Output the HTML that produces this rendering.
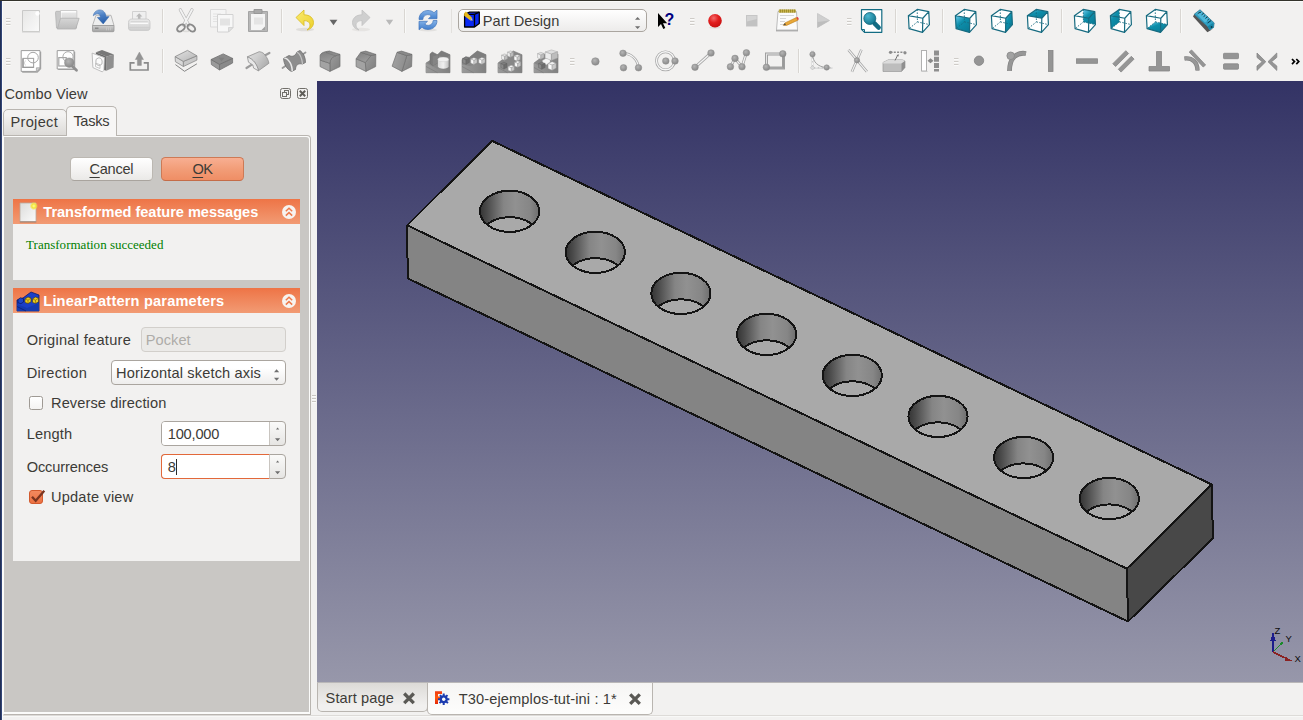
<!DOCTYPE html>
<html>
<head>
<meta charset="utf-8">
<title>FreeCAD</title>
<style>
html,body{margin:0;padding:0;}
body{width:1303px;height:720px;overflow:hidden;background:#f2f1f0;position:relative;font-family:"Liberation Sans","DejaVu Sans",sans-serif;font-size:14.6px;color:#3c3b37;}
.abs{position:absolute;}
#topline{left:0;top:0;width:1303px;height:1px;background:#34332b;}
#topwhite{left:2px;top:1px;width:1301px;height:1px;background:#fbfbfa;}
#leftedge{left:0;top:1px;width:2px;height:719px;background:linear-gradient(to right,#1a2444,#3a5088);}
#leftwhite{left:2px;top:1px;width:1px;height:719px;background:#fbfbfa;}
.t{position:absolute;white-space:nowrap;}
.t u{text-decoration:underline;text-underline-offset:3px;text-decoration-thickness:1px;}
#view{left:317px;top:81px;width:986px;height:601px;background:linear-gradient(to bottom,#333365,#9797aa);overflow:hidden;}
#frameo{left:3px;top:135px;width:308px;height:580px;box-sizing:border-box;border:1px solid #b9b5b0;border-left-color:#fbfbfa;border-radius:0 4px 0 0;background:#fbfbfa;}
#frame{left:4px;top:137px;width:305px;height:575px;background:#c9c7c4;border-radius:0 3px 0 0;}
.tab{position:absolute;box-sizing:border-box;border:1px solid #b9b5b0;border-bottom:none;border-radius:5px 5px 0 0;}
.hdr{position:absolute;left:13px;width:287px;height:25px;background:linear-gradient(to bottom,#ee7446,#f29b74);}
.box{position:absolute;left:13px;width:287px;background:#f2f1f0;}
.btn{position:absolute;box-sizing:border-box;border:1px solid #aca7a1;border-radius:4.5px;}
.inp{position:absolute;box-sizing:border-box;border:1px solid #b3aea8;border-radius:4px;background:#fff;}
.cb{position:absolute;box-sizing:border-box;width:14px;height:14px;border:1px solid #9f9a94;border-radius:2.5px;background:linear-gradient(to bottom,#ffffff,#f4f3f2);}
.circ{position:absolute;width:14px;height:14px;border-radius:7px;background:#f7f3f0;}

</style>
</head>
<body>
<div id="topline" class="abs"></div>
<div id="topwhite" class="abs"></div>
<!-- 3D VIEW -->
<div id="view" class="abs">
<svg width="986" height="601" viewBox="317 81 986 601" style="position:absolute;left:0;top:0" shape-rendering="crispEdges">
<defs>
<linearGradient id="gWall" x1="0" y1="0" x2="1" y2="0"><stop offset="0" stop-color="#343434"/><stop offset="0.12" stop-color="#4a4a4a"/><stop offset="0.4" stop-color="#858585"/><stop offset="0.6" stop-color="#919191"/><stop offset="0.85" stop-color="#868686"/><stop offset="1" stop-color="#6e6e6e"/></linearGradient>
</defs>
<polygon points="492.0,140.8 407.2,225.3 1126.9,568.7 1211.6,484.4" fill="#a9a9a9"/>
<polygon points="407.2,225.3 1126.9,568.7 1128.0,621.5 407.7,278.4" fill="#848484"/>
<polygon points="1126.9,568.7 1211.6,484.4 1213.0,538.2 1128.0,621.5" fill="#484848"/>
<clipPath id="hc0"><ellipse cx="509.6" cy="211.3" rx="29.6" ry="20.6"/></clipPath>
<g clip-path="url(#hc0)"><rect x="480.0" y="190.7" width="59.2" height="41.2" fill="url(#gWall)"/><ellipse cx="509.6" cy="237.8" rx="29.6" ry="20.6" fill="#a9a9a9" stroke="#141414" stroke-width="2"/></g>
<ellipse cx="509.6" cy="211.3" rx="29.6" ry="20.6" fill="none" stroke="#141414" stroke-width="2"/>
<clipPath id="hc1"><ellipse cx="595.3" cy="252.3" rx="29.6" ry="20.6"/></clipPath>
<g clip-path="url(#hc1)"><rect x="565.7" y="231.7" width="59.2" height="41.2" fill="url(#gWall)"/><ellipse cx="595.3" cy="278.8" rx="29.6" ry="20.6" fill="#a9a9a9" stroke="#141414" stroke-width="2"/></g>
<ellipse cx="595.3" cy="252.3" rx="29.6" ry="20.6" fill="none" stroke="#141414" stroke-width="2"/>
<clipPath id="hc2"><ellipse cx="680.9" cy="293.4" rx="29.6" ry="20.6"/></clipPath>
<g clip-path="url(#hc2)"><rect x="651.3" y="272.8" width="59.2" height="41.2" fill="url(#gWall)"/><ellipse cx="680.9" cy="319.9" rx="29.6" ry="20.6" fill="#a9a9a9" stroke="#141414" stroke-width="2"/></g>
<ellipse cx="680.9" cy="293.4" rx="29.6" ry="20.6" fill="none" stroke="#141414" stroke-width="2"/>
<clipPath id="hc3"><ellipse cx="766.6" cy="334.4" rx="29.6" ry="20.6"/></clipPath>
<g clip-path="url(#hc3)"><rect x="737.0" y="313.8" width="59.2" height="41.2" fill="url(#gWall)"/><ellipse cx="766.6" cy="360.9" rx="29.6" ry="20.6" fill="#a9a9a9" stroke="#141414" stroke-width="2"/></g>
<ellipse cx="766.6" cy="334.4" rx="29.6" ry="20.6" fill="none" stroke="#141414" stroke-width="2"/>
<clipPath id="hc4"><ellipse cx="852.3" cy="375.4" rx="29.6" ry="20.6"/></clipPath>
<g clip-path="url(#hc4)"><rect x="822.7" y="354.8" width="59.2" height="41.2" fill="url(#gWall)"/><ellipse cx="852.3" cy="401.9" rx="29.6" ry="20.6" fill="#a9a9a9" stroke="#141414" stroke-width="2"/></g>
<ellipse cx="852.3" cy="375.4" rx="29.6" ry="20.6" fill="none" stroke="#141414" stroke-width="2"/>
<clipPath id="hc5"><ellipse cx="938.0" cy="416.4" rx="29.6" ry="20.6"/></clipPath>
<g clip-path="url(#hc5)"><rect x="908.4" y="395.8" width="59.2" height="41.2" fill="url(#gWall)"/><ellipse cx="938.0" cy="442.9" rx="29.6" ry="20.6" fill="#a9a9a9" stroke="#141414" stroke-width="2"/></g>
<ellipse cx="938.0" cy="416.4" rx="29.6" ry="20.6" fill="none" stroke="#141414" stroke-width="2"/>
<clipPath id="hc6"><ellipse cx="1023.6" cy="457.5" rx="29.6" ry="20.6"/></clipPath>
<g clip-path="url(#hc6)"><rect x="994.0" y="436.9" width="59.2" height="41.2" fill="url(#gWall)"/><ellipse cx="1023.6" cy="484.0" rx="29.6" ry="20.6" fill="#a9a9a9" stroke="#141414" stroke-width="2"/></g>
<ellipse cx="1023.6" cy="457.5" rx="29.6" ry="20.6" fill="none" stroke="#141414" stroke-width="2"/>
<clipPath id="hc7"><ellipse cx="1109.3" cy="498.5" rx="29.6" ry="20.6"/></clipPath>
<g clip-path="url(#hc7)"><rect x="1079.7" y="477.9" width="59.2" height="41.2" fill="url(#gWall)"/><ellipse cx="1109.3" cy="525.0" rx="29.6" ry="20.6" fill="#a9a9a9" stroke="#141414" stroke-width="2"/></g>
<ellipse cx="1109.3" cy="498.5" rx="29.6" ry="20.6" fill="none" stroke="#141414" stroke-width="2"/>
<g fill="none" stroke="#141414" stroke-width="2" stroke-linejoin="round" stroke-linecap="round"><polygon points="492.0,140.8 407.2,225.3 1126.9,568.7 1211.6,484.4"/><polyline points="407.2,225.3 407.7,278.4 1128.0,621.5 1213.0,538.2 1211.6,484.4"/><polyline points="1126.9,568.7 1128.0,621.5"/></g>
<g font-family="'Liberation Sans','DejaVu Sans',sans-serif" font-size="9.500" fill="#0c0c0c">
<path d="M1273 652V633" stroke="#1c1c8c" stroke-width="2.400"/><path d="M1270 641l3-8 3 8z" fill="#1c1c8c"/>
<path d="M1273 652l9.500-9.500" stroke="#1a8a2a" stroke-width="1.400"/><path d="M1279 643l4.500-1.500-1.500 4.500z" fill="#1a8a2a"/>
<path d="M1273 652l18.500 9" stroke="#8a2222" stroke-width="1.600"/><path d="M1284.500 656l7.500 5-6.500-.2z" fill="#8a2222"/>
<text x="1274.500" y="634">Z</text><text x="1285.500" y="642">Y</text><text x="1294.500" y="662">X</text></g>
</svg>
</div>
<!-- COMBO VIEW -->
<svg class="abs" style="left:278px;top:86px" width="34" height="15" viewBox="278 86 34 15">
<rect x="280.500" y="88.500" width="10" height="10" rx="2" fill="none" stroke="#716f6a" stroke-width="1"/>
<rect x="284.500" y="90.500" width="4" height="4" fill="none" stroke="#716f6a"/>
<rect x="282.500" y="92.500" width="4" height="4" fill="#f2f1f0" stroke="#716f6a"/>
<rect x="297.500" y="88.500" width="10" height="10" rx="2" fill="none" stroke="#716f6a" stroke-width="1"/>
<path d="M299.800 90.800l5.400 5.400M305.200 90.800l-5.400 5.400" stroke="#5f5d58" stroke-width="2"/>
</svg>
<div id="frameo" class="abs"></div>
<div id="frame" class="abs"></div>
<div class="tab" style="left:3px;top:109px;width:64px;height:27px;background:linear-gradient(to bottom,#f3f2f1 20%,#dddbd8);border-bottom:1px solid #b9b5b0;"></div>
<div class="tab" style="left:66px;top:106px;width:51px;height:30px;background:#f7f6f5;"></div>
<div class="abs" style="left:67px;top:136px;width:49px;height:1px;background:#f9f8f7;"></div>
<!-- buttons -->
<div class="btn" style="left:70px;top:157px;width:83px;height:24px;border-color:#bcb8b2 #bcb8b2 #a9a49e;background:linear-gradient(to bottom,#ffffff,#f3f2f1 60%,#eae9e7);"></div>
<div class="btn" style="left:161px;top:157px;width:83px;height:24px;border-color:#cd7a56 #cd7a56 #c46c48;background:linear-gradient(to bottom,#f8af92,#f29d78 50%,#ef8e65);"></div>
<!-- group 1 -->
<div class="hdr" style="top:199px;"></div>
<div class="box" style="top:224px;height:56px;"></div>
<svg class="abs" style="left:18px;top:201px" width="22" height="22" viewBox="18 201 22 22">
<defs><radialGradient id="gStar"><stop offset="0" stop-color="#ffff9a"/><stop offset="0.5" stop-color="#f4e43a"/><stop offset="1" stop-color="#f4e43a" stop-opacity="0"/></radialGradient>
<linearGradient id="gPg" x1="0" y1="0" x2="1" y2="1"><stop offset="0" stop-color="#dcdcdb"/><stop offset="1" stop-color="#fbfbfb"/></linearGradient></defs>
<path d="M20 203h16v18.500h-16z" fill="url(#gPg)" stroke="#b9a9a0" stroke-width="0.800"/>
<path d="M19.800 222h16.500" stroke="#8a7a70" stroke-width="0.800"/>
<circle cx="33.800" cy="206" r="4.200" fill="url(#gStar)"/>
</svg>
<div class="circ" style="left:282px;top:205px;"></div>
<!-- group 2 -->
<div class="hdr" style="top:288px;"></div>
<div class="box" style="top:313px;height:248px;"></div>
<div class="circ" style="left:282px;top:294px;"></div>
<svg class="abs" style="left:280px;top:200px" width="20" height="112" viewBox="280 200 20 112">
<path d="M285.800 211.200l3.200-3 3.200 3M285.800 215.600l3.200-3 3.200 3" fill="none" stroke="#ee7a4c" stroke-width="1.500"/>
<path d="M285.800 300.200l3.200-3 3.200 3M285.800 304.600l3.200-3 3.200 3" fill="none" stroke="#ee7a4c" stroke-width="1.500"/>
</svg>
<svg class="abs" style="left:16px;top:290px" width="24" height="22" viewBox="16 290 24 22">
<path d="M17 300l6-2 8-6 8 3v16h-22z" fill="#1a3fc8" stroke="#0a1a70" stroke-width="0.800" stroke-linejoin="round"/>
<path d="M17 304l10 4 12-5v8h-22z" fill="#143ab0"/>
<path d="M17 306.500l9 4.500" stroke="#0a1a70" stroke-width="0.700"/>
<path d="M18 299.500l2.500-1.800 3 1v3.300l-2.600 1.700-2.900-1z" fill="#1a44c8" stroke="#08124a" stroke-width="0.600"/>
<path d="M25 299l3-2 3 1.200v3.600l-3 1.800-3-1.200z" fill="#e8c81e" stroke="#4a3a08" stroke-width="0.600"/>
<path d="M32.500 299l3-2 3 1.200v3.600l-3 1.800-3-1.200z" fill="#e8c81e" stroke="#4a3a08" stroke-width="0.600"/>
<path d="M25 299l3 1.200 3-2M28 300.200v3.400M32.500 299l3 1.200 3-2M35.500 300.200v3.400" fill="none" stroke="#6a5208" stroke-width="0.500"/>
</svg>
<!-- fields -->
<div class="inp" style="left:141px;top:327px;width:145px;height:25px;background:#ebeae8;border-color:#d2cfcb;"></div>
<div class="inp" style="left:111px;top:360px;width:175px;height:25px;border-color:#aaa59f;background:linear-gradient(to bottom,#ffffff 30%,#eeedec);"></div>
<div class="cb" style="left:29px;top:396px;"></div>
<!-- spin 1 -->
<div class="inp" style="left:161px;top:421px;width:125px;height:25px;border-color:#aaa59f;background:linear-gradient(to bottom,#fafaf9,#e6e5e3);"></div>
<div class="abs" style="left:162px;top:422px;width:107px;height:23px;background:#fff;border-radius:3px 0 0 3px;border-right:1px solid #c9c5c0;"></div>
<!-- spin 2 -->
<div class="inp" style="left:161px;top:454px;width:125px;height:25px;border-color:#aaa59f;background:linear-gradient(to bottom,#fafaf9,#e6e5e3);"></div>
<div class="abs" style="left:161px;top:454px;width:109px;height:25px;box-sizing:border-box;background:#fff;border-radius:4px 0 0 4px;border:1.500px solid #e2683a;border-right:1px solid #c9c5c0;"></div>
<div class="abs" style="left:176px;top:459px;width:1px;height:16px;background:#2a2a2a;"></div>
<svg class="abs" style="left:268px;top:360px" width="20" height="122" viewBox="268 360 20 122">
<path d="M274 372.200l2.600-3 2.600 3zM274 377.800l2.600 3 2.600-3z" fill="#6f6f6f"/>
<path d="M276 429.500l1.600-2 1.600 2zM275 438.200l2.600 3 2.600-3z" fill="#6f6f6f"/>
<path d="M276 462.500l1.600-2 1.600 2zM275 471.200l2.600 3 2.600-3z" fill="#6f6f6f"/>
</svg>
<!-- checked box -->
<svg class="abs" style="left:28px;top:488px" width="20" height="18" viewBox="28 488 20 18">
<defs><linearGradient id="gChk" x1="0" y1="0" x2="0" y2="1"><stop offset="0" stop-color="#f28a60"/><stop offset="1" stop-color="#ec7040"/></linearGradient></defs>
<rect x="29.500" y="490.500" width="13" height="13" rx="2.500" fill="url(#gChk)" stroke="#d25a2e"/>
<path d="M32 496.800l3.700 4 8.600-10" fill="none" stroke="#7a3520" stroke-width="2.300"/>
</svg>
<!-- splitter dots -->
<div class="abs" style="left:312px;top:395px;width:4px;height:1px;background:#c9c6c1;box-shadow:0 3px 0 #c9c6c1,0 6px 0 #c9c6c1,0 1px 0 #fbfbfa,0 4px 0 #fbfbfa,0 7px 0 #fbfbfa;"></div>

<!-- BOTTOM TABS -->
<div class="abs" style="left:317px;top:682px;width:986px;height:1px;background:#b9b7b8;"></div>
<div class="abs" style="left:317px;top:683px;width:111px;height:29px;box-sizing:border-box;border:1px solid #b9b5b0;border-top:none;border-radius:0 0 5px 5px;background:linear-gradient(to bottom,#dcdad7,#f1f0ef 80%);"></div>
<div class="abs" style="left:427px;top:683px;width:226px;height:32px;box-sizing:border-box;border:1px solid #b9b5b0;border-top:none;border-radius:0 0 5px 5px;background:linear-gradient(to bottom,#f6f5f4,#fdfdfc);"></div>
<svg class="abs" style="left:400px;top:688px" width="250" height="22" viewBox="400 688 250 22">
<path d="M404.200 693.500l9.600 9.600M413.800 693.500l-9.600 9.600" stroke="#5a5955" stroke-width="3.300"/>
<path d="M630.200 694.300l9.600 9.600M639.800 694.300l-9.600 9.600" stroke="#5a5955" stroke-width="3.300"/>
<defs><linearGradient id="gF" x1="0" y1="0" x2="0" y2="1"><stop offset="0" stop-color="#ee3a10"/><stop offset="0.500" stop-color="#ff5a10"/><stop offset="1" stop-color="#e42808"/></linearGradient></defs>
<path d="M435 691.300h7v2.600h-4v2.700h3v2.400h-3v5h-3z" fill="url(#gF)"/>
<g fill="#1c3cb0"><circle cx="443.700" cy="699.200" r="4"/><path d="M442.700 693.500h2v11.400h-2zM438 698.200h11.400v2h-11.400zM439.200 695.800l1.400-1.400 8 8-1.400 1.400zM446.800 694.400l1.400 1.400-8 8-1.400-1.400z"/></g>
<circle cx="443.700" cy="699.200" r="1.700" fill="#fbfbfa"/>
</svg>
<div class="abs" style="left:2px;top:715px;width:1301px;height:1px;background:#dddbd8;box-shadow:0 1px 0 #f8f8f7;"></div>

<!-- TOOLBARS -->
<svg class="abs" style="left:0;top:0" width="1303" height="81" viewBox="0 0 1303 81">
<!-- ===== toolbar row 1 ===== -->
<defs>
<linearGradient id="gPaper" x1="0" y1="0" x2="1" y2="1"><stop offset="0" stop-color="#e6e6e5"/><stop offset="1" stop-color="#fafafa"/></linearGradient>
<linearGradient id="gFold" x1="0" y1="0" x2="0" y2="1"><stop offset="0" stop-color="#d6d6d6"/><stop offset="1" stop-color="#bcbcbc"/></linearGradient>
<linearGradient id="gDrive" x1="0" y1="0" x2="0" y2="1"><stop offset="0" stop-color="#e4e4e4"/><stop offset="1" stop-color="#a9a9a9"/></linearGradient>
<radialGradient id="gRed" cx="0.4" cy="0.3" r="0.7"><stop offset="0" stop-color="#f36a6a"/><stop offset="0.5" stop-color="#e21f1f"/><stop offset="1" stop-color="#c81010"/></radialGradient>
<radialGradient id="gTeal" cx="0.35" cy="0.3" r="0.8"><stop offset="0" stop-color="#4bb6d0"/><stop offset="1" stop-color="#0d7289"/></radialGradient>
<linearGradient id="gCube" x1="0" y1="0" x2="0.700" y2="1"><stop offset="0" stop-color="#6fcdee"/><stop offset="0.450" stop-color="#0e8fab"/><stop offset="1" stop-color="#0a7d98"/></linearGradient>
<linearGradient id="gYel" x1="0" y1="0" x2="1" y2="1"><stop offset="0" stop-color="#faea6e"/><stop offset="1" stop-color="#ecd02c"/></linearGradient>
<linearGradient id="gBlue" x1="0" y1="0" x2="0" y2="1"><stop offset="0" stop-color="#86b4e8"/><stop offset="1" stop-color="#3f7ccb"/></linearGradient>
<linearGradient id="gGrey" x1="0" y1="0" x2="1" y2="1"><stop offset="0" stop-color="#a5a5a5"/><stop offset="1" stop-color="#7a7a7a"/></linearGradient>
<linearGradient id="gGreyL" x1="0" y1="0" x2="1" y2="1"><stop offset="0" stop-color="#e2e2e2"/><stop offset="1" stop-color="#b5b5b5"/></linearGradient>
<radialGradient id="gBall" cx="0.4" cy="0.35" r="0.7"><stop offset="0" stop-color="#b5b5b5"/><stop offset="1" stop-color="#858585"/></radialGradient>
<linearGradient id="gDrive2" x1="0" y1="0" x2="0" y2="1"><stop offset="0" stop-color="#cfcfcf"/><stop offset="1" stop-color="#a2a2a2"/></linearGradient>
<linearGradient id="gArr" x1="0" y1="0" x2="0.300" y2="1"><stop offset="0" stop-color="#8fb4e0"/><stop offset="0.500" stop-color="#4a7fc4"/><stop offset="1" stop-color="#2c62ac"/></linearGradient>
<linearGradient id="gPrn" x1="0" y1="0" x2="0" y2="1"><stop offset="0" stop-color="#ebebeb"/><stop offset="1" stop-color="#cfcfcf"/></linearGradient>
<g id="handle"><path d="M0 0.5h4.5M0 3.5h4.5M0 6.5h4.5" stroke="#cfccc8" stroke-width="1"/><path d="M0 1.5h4.5M0 4.5h4.5M0 7.5h4.5" stroke="#fbfbfa" stroke-width="1"/></g>
<g id="sep"><path d="M0.5 0v24" stroke="#d9d6d2" stroke-width="1"/><path d="M1.5 0v24" stroke="#f9f9f8" stroke-width="1"/></g>
<g id="cubewire" fill="none" stroke="#176b80" stroke-width="1.200" stroke-linejoin="round">
<path d="M10.250 1.400 10.400 13.900 2.100 20.600M10.400 13.900 22.400 16.600" stroke-dasharray="1.600 1.400" stroke-width="0.900"/>
<path d="M1.400 7.700 15.800 10.250 15.500 24.400 2.100 20.600ZM1.400 7.700 10.250 1.400 21.800 3.700 15.800 10.250M21.800 3.700 22.400 16.600 15.500 24.400"/>
</g>
</defs>
<use href="#handle" x="6" y="18"/>
<!-- new -->
<g>
<path d="M22.5 10.5h17v21h-17z" fill="url(#gPaper)" stroke="#c9c9c8" stroke-width="1"/>
<path d="M22 32h18" stroke="#d0d0cf" stroke-width="1"/>
<circle cx="37.5" cy="13.5" r="2.2" fill="#ffffff" opacity="0.9"/>
</g>
<!-- open -->
<g>
<path d="M55.500 12.500c0-.8.400-1.200 1.200-1.200h4.300l1 1.500h14.500v15.200h-20z" fill="#c9c9c9" stroke="#b4b4b4" stroke-width="0.800"/>
<path d="M60.500 10.500h16.300v12h-16.300z" fill="#fdfdfd" stroke="#c6c6c6" stroke-width="0.900"/>
<path d="M61.500 12.500h14.500v6h-14.500z" fill="url(#gFold)" opacity="0.550"/>
<path d="M60.500 18.300h18.600l-3.300 10.700h-18.500z" fill="url(#gFold)" stroke="#b1b1b1" stroke-width="0.800" stroke-linejoin="round"/>
</g>
<!-- save -->
<g>
<path d="M96 15.300h15l3 10.200h-21.500z" fill="#eeeeee" stroke="#a9a9a9" stroke-width="0.800" stroke-linejoin="round"/>
<path d="M92.500 25.500h21.500v5.300c0 .6-.3.900-.9.900h-19.700c-.6 0-.9-.3-.9-.9z" fill="url(#gDrive2)" stroke="#979797" stroke-width="0.800"/>
<path d="M95 27.500h3.500v1.500h-3.500z" fill="#8a8a8a"/><path d="M106.500 26.800v3.500M108.500 26.800v3.500M110.500 26.800v3.500" stroke="#c9c9c9" stroke-width="0.800"/>
<path d="M93.300 15.800c.5-3.800 3.500-6 6.700-5.900 3.500.2 5.700 2.800 6 6.800l3.100-.1-5.900 7.300-5.900-6.500 3.100-.1c-.2-3-2.600-5.200-7.100-1.500z" fill="url(#gArr)" stroke="#2f62a8" stroke-width="0.500" stroke-linejoin="round"/>
</g>
<!-- print -->
<g>
<path d="M132.500 11.500h13.500v9h-13.500z" fill="#efefef" stroke="#cdcdcd" stroke-width="0.900"/>
<path d="M139.200 13.200l3.200 3.400h-1.900v3h-2.600v-3h-1.900z" fill="#b9b9b9"/>
<path d="M128.500 22.500c0-2.200 1.300-3.500 3.500-3.500h14.500c2.200 0 3.500 1.300 3.500 3.500v5.500c0 1.500-.9 2.400-2.400 2.400h-16.700c-1.500 0-2.400-.9-2.400-2.400z" fill="url(#gPrn)" stroke="#c6c6c6" stroke-width="0.800"/>
<path d="M131 23.200h16.500" stroke="#fafafa" stroke-width="1.600" stroke-linecap="round"/>
<path d="M130.800 21.800h17" stroke="#c9c9c9" stroke-width="0.700"/>
<path d="M129 27.500h20.500" stroke="#cccccc" stroke-width="0.700"/>
</g>
<use href="#sep" x="162" y="9"/>
<!-- cut -->
<g fill="none">
<path d="M180.300 9.800l8.400 15.200M192 9.800l-8.400 15.200" stroke="#b9b9b9" stroke-width="3.200" stroke-linecap="round"/>
<path d="M180.300 9.800l8.400 15.200M192 9.800l-8.400 15.200" stroke="#f3f3f3" stroke-width="1.800" stroke-linecap="round"/>
<ellipse cx="181" cy="28" rx="4.300" ry="2.900" transform="rotate(-38 181 28)" stroke="#8a8a8a" stroke-width="2"/>
<ellipse cx="191.300" cy="28" rx="4.300" ry="2.900" transform="rotate(38 191.300 28)" stroke="#8a8a8a" stroke-width="2"/>
<ellipse cx="186.100" cy="31.300" rx="4" ry="0.900" fill="#dddcda" stroke="none"/>
</g>
<!-- copy -->
<g>
<path d="M210.500 9.500h15.500v17.500h-15.500z" fill="#f4f4f4" stroke="#dadada"/>
<path d="M213 14h8M213 16.500h8M213 19h8M213 21.500h8" stroke="#e2e2e2"/>
<path d="M217.500 14.500h15.500v13l-4.500 4.500h-11z" fill="#f7f7f7" stroke="#d2d2d2"/>
<path d="M220 18.500h10v7h-10z" fill="#e3e3e3"/>
<path d="M233 27.500h-4.500v4.500z" fill="#e0e0e0" stroke="#cfcfcf" stroke-width="0.8"/>
</g>
<!-- paste -->
<g>
<path d="M248.500 11.500h19v20h-19z" fill="#b7b7b7" stroke="#a4a4a4"/>
<path d="M251 14h14v16h-14z" fill="#f4f4f4"/>
<path d="M254 9.500h8v4h-8z" fill="#a9a9a9" stroke="#989898"/>
<path d="M254 17.500h9v7h-9z" fill="#e4e4e4"/>
<path d="M265 26.500l-3.500 3.500h3.500z" fill="#a2a2a2"/>
</g>
<use href="#sep" x="281" y="9"/>
<!-- undo -->
<g>
<ellipse cx="305" cy="29.500" rx="9" ry="1.800" fill="#d9d8d5" opacity="0.8"/>
<path d="M296 17.500l8-7.500v4.800c6 0 9.500 3.500 9.500 7.800 0 3.500-2.500 6.500-6.500 7.400 2-1.500 3-3.200 3-5 0-2.800-2.500-4.400-6-4.400v5z" fill="url(#gYel)" stroke="#d8bb20" stroke-width="0.800" stroke-linejoin="round"/>
</g>
<path d="M329.600 19.800h7.800l-3.900 5.400z" fill="#666666"/>
<!-- redo -->
<g>
<ellipse cx="361" cy="29.500" rx="9" ry="1.800" fill="#e2e1df" opacity="0.8"/>
<path d="M370 17.500l-8-7.500v4.800c-6 0-9.500 3.500-9.500 7.800 0 3.500 2.500 6.500 6.500 7.400-2-1.500-3-3.200-3-5 0-2.800 2.500-4.400 6-4.400v5z" fill="#cfcfcf" stroke="#c2c2c2" stroke-width="0.800" stroke-linejoin="round"/>
</g>
<path d="M385.800 19.800h7.400l-3.700 5.200z" fill="#b9b9b9"/>
<use href="#sep" x="404" y="9"/>
<!-- refresh -->
<g>
<ellipse cx="428" cy="30" rx="9" ry="1.500" fill="#dddcd9" opacity="0.8"/>
<path d="M419 19.500c0-5.500 4-9 9-9 2.500 0 4.500.8 6 2.200l3-2.500v8.500h-8.500l2.800-2.800c-1-.9-2-1.300-3.500-1.300-2.800 0-4.800 2-5 4.900z" fill="url(#gBlue)" stroke="#3f74bb" stroke-width="0.700" stroke-linejoin="round"/>
<path d="M437 20.500c0 5.500-4 9-9 9-2.500 0-4.500-.8-6-2.200l-3 2.500v-8.500h8.500l-2.800 2.800c1 .9 2 1.300 3.500 1.300 2.800 0 4.800-2 5-4.900z" fill="url(#gBlue)" stroke="#3f74bb" stroke-width="0.700" stroke-linejoin="round"/>
</g>
<path d="M451.500 9v24" stroke="#e2e0dd"/>

<!-- combobox -->
<defs><linearGradient id="gCombo" x1="0" y1="0" x2="0" y2="1"><stop offset="0" stop-color="#ffffff"/><stop offset="1" stop-color="#ecebea"/></linearGradient></defs>
<rect x="458.500" y="9.500" width="188" height="22" rx="4.500" fill="url(#gCombo)" stroke="#aaa59f"/>
<path d="M635 19.800l2.600-2.800 2.600 2.800z" fill="#6f6f6f"/>
<path d="M635 26.200l2.600 2.800 2.600-2.800z" fill="#6f6f6f"/>
<!-- part design icon -->
<g stroke-linejoin="round">
<path d="M464.600 14.400l5-2.200h9.700v11.300l-4.800 3.500h-9.900z" fill="#0828f4" stroke="#000000" stroke-width="1.300"/>
<path d="M464.600 14.400h9.900v12.600M474.500 14.400l4.800-2.200" fill="none" stroke="#000" stroke-width="1.300"/>
<path d="M464.200 13.200l1.600-1.800 6.200 6.400-2 2.400-5.800-4.500z" fill="#e6b81a"/>
<path d="M470 20.200l2-2.400.6 3.300z" fill="#c9c9c9"/>
<path d="M471.600 20.400l1 .8" stroke="#222" stroke-width="0.800"/>
</g>
<!-- whats this -->
<g>
<path d="M658 13v14l3-3 2.300 5 2-1-2.300-4.800h4.200z" fill="#000000"/>
<text x="664.500" y="24.600" font-family="'Liberation Sans','DejaVu Sans',sans-serif" font-weight="bold" font-size="16" fill="#000080">?</text>
</g>
<use href="#handle" x="690" y="18"/>
<!-- record -->
<ellipse cx="715" cy="27.500" rx="6" ry="1.200" fill="#e2e0dd"/>
<circle cx="715" cy="20.800" r="6.800" fill="url(#gRed)"/>
<!-- stop -->
<rect x="746.500" y="15.500" width="10.500" height="10.500" fill="#d4d4d4" stroke="#c6c6c6"/>
<path d="M747 21.500l10-2.500v7h-10z" fill="#c2c2c2"/>
<!-- macro edit -->
<g>
<path d="M776 30.700h22" stroke="#a9a9a9" stroke-width="1.400"/>
<path d="M778 11.500h18.500l1 18.500h-21z" fill="#fbfbfb" stroke="#b4b4b4" stroke-width="0.900"/>
<path d="M779 9.800h16.500v2.600h-16.500z" fill="#cdb84e" stroke="#a8942a" stroke-width="0.500"/>
<path d="M780.500 9.500v3M782.500 9.500v3M784.500 9.500v3M786.500 9.500v3M788.500 9.500v3M790.500 9.500v3M792.500 9.500v3M794.500 9.500v3" stroke="#8f7e20" stroke-width="0.700"/>
<path d="M780 15.500h14M780 18.500h6M780 21.500h5M780 24.500h4" stroke="#d6d6d6" stroke-width="1.100"/>
<path d="M783.300 25.300l1.700-2.400 11.300-5.300 1.600 2.600-11.300 5.200z" fill="#e9a838" stroke="#b87c1c" stroke-width="0.600"/>
<path d="M796.300 17.600l1.200-.5c.9.400 1.300 1.300 1.100 2.300l-.7.800z" fill="#e33a3a"/>
<path d="M783.300 25.300l1.700-2.400.9 2z" fill="#4a4a4a"/>
</g>
<!-- play -->
<path d="M817.500 13.500v14l12-7z" fill="#cfcfcf" stroke="#c4c4c4" stroke-width="0.800"/>
<path d="M817.500 22l12-1.500-12 7z" fill="#bdbdbd"/>
<use href="#handle" x="847" y="18"/>
<!-- zoom fit -->
<g>
<path d="M861.500 9.700h20.300v22.600h-17.300l-3-3z" fill="#ffffff" stroke="#136c83" stroke-width="1.200" stroke-linejoin="round"/>
<path d="M861.500 29.500h3v3" fill="none" stroke="#136c83" stroke-width="1"/>
<path d="M874.500 23.400l4.200 4.200" stroke="#136c83" stroke-width="4.400" stroke-linecap="round"/>
<circle cx="869.800" cy="18.500" r="6" fill="url(#gTeal)" stroke="#0d6278" stroke-width="0.800"/>
</g>
<use href="#sep" x="895" y="9"/>
<!-- cubes -->
<g transform="translate(907 8)"><path d="M1.400 7.700 10.250 1.400 21.800 3.700 22.400 16.600 15.500 24.400 2.100 20.600Z" fill="#fff"/><use href="#cubewire"/></g>
<use href="#sep" x="942" y="9"/>
<g transform="translate(954 8)"><path d="M1.400 7.700 10.250 1.400 21.800 3.700 22.400 16.600 15.500 24.400 2.100 20.600Z" fill="#fff"/><path d="M1.400 7.700 15.800 10.250 15.500 24.400 2.100 20.600Z" fill="url(#gCube)"/><use href="#cubewire"/></g>
<g transform="translate(990 8)"><path d="M1.400 7.700 10.250 1.400 21.800 3.700 22.400 16.600 15.500 24.400 2.100 20.600Z" fill="#fff"/><path d="M15.800 10.250 21.800 3.700 22.400 16.600 15.500 24.400Z" fill="url(#gCube)"/><use href="#cubewire"/></g>
<g transform="translate(1026 8)"><path d="M1.400 7.700 10.250 1.400 21.800 3.700 22.400 16.600 15.500 24.400 2.100 20.600Z" fill="#fff"/><path d="M1.400 7.700 10.250 1.400 21.800 3.700 15.800 10.250Z" fill="url(#gCube)"/><use href="#cubewire"/></g>
<use href="#sep" x="1061" y="9"/>
<g transform="translate(1073 8)"><path d="M1.400 7.700 10.250 1.400 21.800 3.700 22.400 16.600 15.500 24.400 2.100 20.600Z" fill="#fff"/><path d="M10.250 1.400 21.800 3.700 22.400 16.600 10.400 13.900Z" fill="url(#gCube)"/><use href="#cubewire"/></g>
<g transform="translate(1109 8)"><path d="M1.400 7.700 10.250 1.400 21.800 3.700 22.400 16.600 15.500 24.400 2.100 20.600Z" fill="#fff"/><path d="M1.400 7.700 10.250 1.400 10.400 13.900 2.100 20.600Z" fill="url(#gCube)"/><use href="#cubewire"/></g>
<g transform="translate(1145 8)"><path d="M1.400 7.700 10.250 1.400 21.800 3.700 22.400 16.600 15.500 24.400 2.100 20.600Z" fill="#fff"/><path d="M2.100 20.600 10.400 13.900 22.400 16.600 15.500 24.400Z" fill="url(#gCube)"/><use href="#cubewire"/></g>
<use href="#sep" x="1180" y="9"/>
<!-- ruler -->
<g>
<path d="M1193 16.500L1194.200 14.200 1207.500 26.500 1209.700 29.700 1212.500 29.300 1207.400 32.300Z" fill="#555555"/>
<path d="M1194.200 14.200L1200 9.700 1214.200 22.900 1213.500 27.600 1209.700 29.700 1207.500 26.500Z" fill="#2f9fc2" stroke="#17607a" stroke-width="0.600" stroke-linejoin="round"/>
<path d="M1196 13.600L1200 10.500 1209.500 19.500 1205 22.500Z" fill="#5cc4e6" opacity="0.700"/>
<path d="M1207.500 26.500L1212.800 23 1213.500 27.600 1209.700 29.700Z" fill="#1786a6"/>
<circle cx="1211.600" cy="27" r="0.900" fill="#0c3a4a"/>
<path d="M1197.600 13.800l2.400-1.800M1199.800 12.800l1.400-1M1201.600 14.800l2.200-1.600M1203.600 16.600l1.400-1M1205.400 18.400l2.200-1.600M1207.400 20.200l1.400-1M1207.600 23l3.400-2.400" stroke="#0a2a38" stroke-width="0.900"/>
</g>

<!-- ===== toolbar row 2 ===== -->
<defs><linearGradient id="gFaceR" x1="0" y1="0" x2="1" y2="1"><stop offset="0" stop-color="#9c9c9c"/><stop offset="1" stop-color="#7e7e7e"/></linearGradient><linearGradient id="gFaceT" x1="0" y1="0" x2="0.400" y2="1"><stop offset="0" stop-color="#7e7e7e"/><stop offset="1" stop-color="#9c9c9c"/></linearGradient><linearGradient id="gFaceL" x1="0" y1="0" x2="1" y2="0.300"><stop offset="0" stop-color="#a4a4a4"/><stop offset="1" stop-color="#8e8e8e"/></linearGradient><linearGradient id="gBase" x1="0" y1="0" x2="1" y2="0"><stop offset="0" stop-color="#9a9a9a"/><stop offset="1" stop-color="#808080"/></linearGradient><linearGradient id="gCyl" x1="0" y1="0" x2="1" y2="0"><stop offset="0" stop-color="#d8d8d8"/><stop offset="0.500" stop-color="#f0f0f0"/><stop offset="1" stop-color="#c2c2c2"/></linearGradient><linearGradient id="gRev" x1="0" y1="0" x2="1" y2="0.600"><stop offset="0" stop-color="#dcdcdc"/><stop offset="0.450" stop-color="#cfcfcf"/><stop offset="1" stop-color="#adadad"/></linearGradient></defs>
<use href="#handle" x="6" y="58"/>
<!-- sketch new -->
<g>
<path d="M22.200 51.700h19v17.400l-3.700 3.700h-15.300z" fill="#a4a4a4"/>
<path d="M21.200 50.600h18.800v17.200l-3.600 3.600h-15.200z" fill="#ffffff" stroke="#9c9c9c" stroke-width="1"/>
<path d="M40 67.800h-3.600v3.600" fill="#d0d0d0" stroke="#9c9c9c" stroke-width="0.700"/>
<circle cx="33" cy="57.600" r="5.300" fill="none" stroke="#a6a6a6" stroke-width="1"/>
<rect x="23" y="58.400" width="10.600" height="9" fill="none" stroke="#a6a6a6" stroke-width="1.100"/>
<path d="M23 58.400v9h10.600" fill="none" stroke="#9a9a9a" stroke-width="1.400"/>
<path d="M25.500 60.500l-1.200 2.500 1.200 2.500" fill="none" stroke="#d0d0d0" stroke-width="0.800"/>
</g>
<!-- sketch view -->
<g>
<path d="M58.200 51.700h17v18.400h-17z" fill="#a6a6a6"/>
<path d="M57.200 50.600h16.800v18.400h-16.800z" fill="#ffffff" stroke="#9c9c9c" stroke-width="1"/>
<circle cx="68" cy="56.800" r="5.100" fill="none" stroke="#adadad" stroke-width="1"/>
<rect x="58.800" y="57.600" width="7.400" height="8.400" fill="none" stroke="#a6a6a6" stroke-width="1.200"/>
<path d="M72.500 66.500l4 3.800" stroke="#8f8f8f" stroke-width="2.800" stroke-linecap="round"/>
<circle cx="69.300" cy="62.700" r="4.800" fill="url(#gBall)" stroke="#8c8c8c" stroke-width="0.500"/>
</g>
<!-- leave sketch -->
<g stroke-linejoin="round">
<path d="M95.900 52.300l6.100-2.200 11.900 4.300-7.300 2.200z" fill="#787878"/>
<path d="M106.600 56.600l7.300-2.200-.3 13.200-7.200 3.200z" fill="#8f8f8f"/>
<path d="M104 57.400l2.600-.8-.2 14.200-2.400-.9z" fill="#6e6e6e"/>
<path d="M95.900 52.300l10.700 4.300-2.400.8-8.300-3.200z" fill="#6a6a6a"/>
<path d="M92.100 53.100l12.400 4.500-.6 12.700-1.600 1.600-9.400-4.300z" fill="#fbfbfb" stroke="#b0b0b0" stroke-width="0.800"/>
<ellipse cx="99" cy="61.700" rx="3.200" ry="3.800" fill="none" stroke="#b4b4b4" stroke-width="0.900" transform="rotate(-12 99 61.700)"/>
<path d="M95.500 63l4.500 1.700v3.800l-4.500-1.800z" fill="none" stroke="#bdbdbd" stroke-width="0.800"/>
</g>
<!-- export / upload tray -->
<g>
<path d="M134.600 62.900h-4.300v7.100h17.700v-7.100h-4.300" fill="none" stroke="#8a8a8a" stroke-width="1.700"/>
<path d="M139.400 52l4.100 7.500h-2.100v5.900h-4v-5.900h-2.100z" fill="#949494" stroke="#8a8a8a" stroke-width="0.400"/>
</g>
<use href="#sep" x="162" y="49"/>
<!-- pad -->
<g stroke-linejoin="round">
<path d="M175.400 64.600l9.100 6.700 12.400-7.500" fill="none" stroke="#7a7a7a" stroke-width="0.900"/>
<path d="M175.100 56.600l8.300 4.800v5.100l-8-4.800z" fill="#d8d8d8" stroke="#8a8a8a" stroke-width="0.800"/>
<path d="M183.400 61.400l13.500-5.600v4.300l-13.500 6.400z" fill="#c8c8c8" stroke="#8a8a8a" stroke-width="0.800"/>
<path d="M175.100 56.600l12.400-6.200 9.400 5.400-13.500 5.600z" fill="url(#gGreyL)" stroke="#8a8a8a" stroke-width="0.800"/>
</g>
<!-- pocket -->
<g stroke-linejoin="round">
<path d="M211.100 59.500l8.400 4.900v5.600l-8.100-5.400z" fill="#9a9a9a" stroke="#737373" stroke-width="0.800"/>
<path d="M219.500 64.400l13.100-6v4.600l-13.100 7z" fill="#8a8a8a" stroke="#737373" stroke-width="0.800"/>
<path d="M211.100 59.500l12.100-5.600 9.400 4.500-13.100 6z" fill="#8b8b8b" stroke="#6e6e6e" stroke-width="0.800"/>
<path d="M218.500 57.600l6 .2-3 3.600z" fill="#808080"/>
</g>
<!-- revolution -->
<g stroke-linejoin="round">
<path d="M246.500 68l5.700-3.600M265.700 54.900l3.700-1.900" stroke="#9c9c9c" stroke-width="2.200" stroke-linecap="round"/>
<path d="M247.400 56.800l11.800-5.100c3 .3 5 1.800 5.900 3.500 2 2.500 3.400 5.300 3.800 8.100l-10.500 7.500c-1-6-5-11.500-11-14z" fill="url(#gRev)" stroke="#8f8f8f" stroke-width="0.800"/>
<path d="M247.400 56.800c6 2.500 10 8 11 14l-4.800-2.700-.8-3.200-4.300-2.700z" fill="#e8e8e8" stroke="#8f8f8f" stroke-width="0.800"/>
</g>
<!-- groove -->
<g stroke-linejoin="round">
<path d="M282.500 68l5-3.500M299 57l6.500-4.500" stroke="#9a9a9a" stroke-width="1.800" stroke-linecap="round"/>
<path d="M283.500 58.500l5.500-3c3 1.500 6 1 8-3.500l3-1.500c3.500 2.500 5.500 7 5.500 12l-3 1.500c-4-1-7 1-7 5.500l-4 2c-4.500-2-7.500-7-8-13z" fill="#8d8d8d" stroke="#6f6f6f" stroke-width="0.800"/>
<path d="M283.500 58.500c4 .5 8 5 8 13l1.500-.8c0-6-3-11.500-7.500-13.300z" fill="#e8e8e8"/>
<path d="M297 52c3 2 5 6.500 5.500 12" fill="none" stroke="#c4c4c4" stroke-width="1.200"/>
</g>
<!-- fillet -->
<g stroke-linejoin="round" stroke="#6e6e6e" stroke-width="0.700">
<path d="M329.900 63.300c.3-3.500 1.800-5.800 4.400-6.900 1.700-.8 3.600-1.500 5.700-2v12.200l-10.100 4.800z" fill="url(#gFaceR)"/>
<path d="M320.100 60.100l9.800 3.200v8.100l-9.800-4.800z" fill="#a3a3a3"/>
<path d="M320.100 60.100v-4.500c.5-2.500 4-4.200 9.400-4.500l10.500 3.300c-2.100.5-4 1.200-5.700 2-2.600 1.100-4.100 3.400-4.400 6.900z" fill="url(#gFaceT)"/>
<path d="M329.500 51.100l-3.500 1.500 9.500 3.200" fill="none" stroke-width="0.500"/>
</g>
<!-- chamfer -->
<g stroke-linejoin="round" stroke="#6e6e6e" stroke-width="0.700">
<path d="M365.300 62.500l5.700-6.900 4.800-1.200-.1 12.200-9.800 4.800z" fill="url(#gFaceR)"/>
<path d="M356.100 58.800l9.200 3.700.6 8.900-9.800-4.800z" fill="#a3a3a3"/>
<path d="M356.100 58.800l4.700-6.500 10.200 3.300-5.700 6.900z" fill="url(#gFaceT)"/>
<path d="M360.800 52.300l4.900-1.200 10.100 3.300-4.800 1.200z" fill="#8a8a8a"/>
</g>
<!-- draft -->
<g stroke-linejoin="round" stroke="#6e6e6e" stroke-width="0.700">
<path d="M406.800 55.600l5.200-1.200-.4 12.200-9.700 4.800z" fill="url(#gFaceR)"/>
<path d="M392.100 66.200l4.900-13.900 9.800 3.300-4.900 15.800z" fill="url(#gFaceL)"/>
<path d="M397 52.300l4.500-1.200 10.500 3.300-5.200 1.200z" fill="#8a8a8a"/>
</g>
<!-- mirrored -->
<g stroke-linejoin="round">
<path d="M426 63l4-2.500 7.600-5.800 3.800-3.800 8.600 3.800v18h-24z" fill="#878787" stroke="#777" stroke-width="0.600"/>
<path d="M437.600 54.700l3.800-3.800 8.600 3.800-4 3.500z" fill="#7c7c7c"/>
<path d="M426 63l11.600 6 12.400-6.500v10.200h-24z" fill="url(#gBase)"/>
<path d="M426 66.500l11.600 6.200" stroke="#787878" stroke-width="0.600"/>
<path d="M430 54.100l2.200-2.100 5.900 3-.2 7.700-5.100 3-2.800-2.400z" fill="#7a7a7a" stroke="#6a6a6a" stroke-width="0.500"/>
<path d="M432.800 56.500l5.300-1.500-.2 7.700-5.100 3z" fill="#848484"/>
<path d="M437.900 59.500c0-1.300 2.400-2.300 5.400-2.300s5.300 1 5.300 2.300v6.800c0 1.300-2.300 2.400-5.300 2.400s-5.400-1.100-5.400-2.400z" fill="url(#gCyl)"/>
<ellipse cx="443.200" cy="59.500" rx="5.300" ry="2.200" fill="#f0f0f0" stroke="#c4c4c4" stroke-width="0.400"/>
</g>
<!-- linear pattern -->
<g stroke-linejoin="round">
<path d="M462 59.500l3.800-2.700 3.500.6 8.100-6.500 8.600 3.800v18h-24z" fill="#878787" stroke="#777" stroke-width="0.600"/>
<path d="M469.300 57.400l8.100-6.500 8.600 3.800-5 4.500z" fill="#7e7e7e"/>
<path d="M462 64.500l8 1.500 16-4v10.700h-24z" fill="url(#gBase)"/>
<path d="M462 66.500l11.600 6.200" stroke="#787878" stroke-width="0.600"/>
<path d="M466.0 56.9L469.4 58.2 466.0 59.9 462.6 58.4Z" fill="#7e7e7e" stroke="#606060" stroke-width="0.400"/><path d="M462.6 58.4L466.0 59.9 466.0 64.3 462.6 62.6Z" fill="#8a8a8a" stroke="#606060" stroke-width="0.400"/><path d="M466.0 59.9L469.4 58.2 469.4 62.4 466.0 64.3Z" fill="#6e6e6e" stroke="#606060" stroke-width="0.400"/><path d="M473.9 57.7L477.0 58.9 473.9 60.4 470.8 59.1Z" fill="#f2f2f2" stroke="#9a9a9a" stroke-width="0.400"/><path d="M470.8 59.1L473.9 60.4 473.9 64.5 470.8 63.0Z" fill="#fbfbfb" stroke="#9a9a9a" stroke-width="0.400"/><path d="M473.9 60.4L477.0 58.9 477.0 62.8 473.9 64.5Z" fill="#c9c9c9" stroke="#9a9a9a" stroke-width="0.400"/><path d="M481.9 57.5L485.0 58.7 481.9 60.2 478.8 58.9Z" fill="#f2f2f2" stroke="#9a9a9a" stroke-width="0.400"/><path d="M478.8 58.9L481.9 60.2 481.9 64.3 478.8 62.8Z" fill="#fbfbfb" stroke="#9a9a9a" stroke-width="0.400"/><path d="M481.9 60.2L485.0 58.7 485.0 62.6 481.9 64.3Z" fill="#c9c9c9" stroke="#9a9a9a" stroke-width="0.400"/>
</g>
<!-- polar pattern -->
<g stroke-linejoin="round">
<path d="M498 63l6-4.500 9.100-7.600 8.900 3.800v18h-24z" fill="#878787" stroke="#777" stroke-width="0.600"/>
<path d="M498 63l8 4 16-6v11.700h-24z" fill="url(#gBase)"/>
<path d="M498 67.500l9.500 5.200" stroke="#787878" stroke-width="0.600"/>
<path d="M504.5 53.9L507.5 55.0 504.5 56.5 501.5 55.2Z" fill="#dedede" stroke="#989898" stroke-width="0.400"/><path d="M501.5 55.2L504.5 56.5 504.5 60.3 501.5 58.9Z" fill="#ececec" stroke="#989898" stroke-width="0.400"/><path d="M504.5 56.5L507.5 55.0 507.5 58.7 504.5 60.3Z" fill="#bdbdbd" stroke="#989898" stroke-width="0.400"/><path d="M510.4 50.9L513.4 52.0 510.4 53.5 507.4 52.2Z" fill="#dedede" stroke="#989898" stroke-width="0.400"/><path d="M507.4 52.2L510.4 53.5 510.4 57.3 507.4 55.9Z" fill="#ececec" stroke="#989898" stroke-width="0.400"/><path d="M510.4 53.5L513.4 52.0 513.4 55.7 510.4 57.3Z" fill="#bdbdbd" stroke="#989898" stroke-width="0.400"/><path d="M517.1 54.7L520.1 55.8 517.1 57.3 514.1 56.0Z" fill="#f2f2f2" stroke="#9a9a9a" stroke-width="0.400"/><path d="M514.1 56.0L517.1 57.3 517.1 61.1 514.1 59.7Z" fill="#fbfbfb" stroke="#9a9a9a" stroke-width="0.400"/><path d="M517.1 57.3L520.1 55.8 520.1 59.5 517.1 61.1Z" fill="#c9c9c9" stroke="#9a9a9a" stroke-width="0.400"/><path d="M517.7 60.9L520.7 62.0 517.7 63.5 514.7 62.2Z" fill="#f2f2f2" stroke="#9a9a9a" stroke-width="0.400"/><path d="M514.7 62.2L517.7 63.5 517.7 67.3 514.7 65.9Z" fill="#fbfbfb" stroke="#9a9a9a" stroke-width="0.400"/><path d="M517.7 63.5L520.7 62.0 520.7 65.7 517.7 67.3Z" fill="#c9c9c9" stroke="#9a9a9a" stroke-width="0.400"/><path d="M511.2 65.2L514.2 66.3 511.2 67.8 508.2 66.5Z" fill="#f2f2f2" stroke="#9a9a9a" stroke-width="0.400"/><path d="M508.2 66.5L511.2 67.8 511.2 71.6 508.2 70.2Z" fill="#fbfbfb" stroke="#9a9a9a" stroke-width="0.400"/><path d="M511.2 67.8L514.2 66.3 514.2 70.0 511.2 71.6Z" fill="#c9c9c9" stroke="#9a9a9a" stroke-width="0.400"/><path d="M503.9 62.3L507.0 63.5 503.9 65.0 500.8 63.7Z" fill="#7e7e7e" stroke="#606060" stroke-width="0.400"/><path d="M500.8 63.7L503.9 65.0 503.9 69.1 500.8 67.6Z" fill="#8a8a8a" stroke="#606060" stroke-width="0.400"/><path d="M503.9 65.0L507.0 63.5 507.0 67.4 503.9 69.1Z" fill="#6e6e6e" stroke="#606060" stroke-width="0.400"/>
</g>
<!-- multitransform -->
<g stroke-linejoin="round">
<path d="M534 63l6-4.500 5-4.600 13 .2v18.600h-24z" fill="#878787" stroke="#777" stroke-width="0.600"/>
<path d="M534 63l8 4 16-6v11.700h-24z" fill="url(#gBase)"/>
<path d="M534 67.500l9.500 5.200" stroke="#787878" stroke-width="0.600"/>
<path d="M551.4 49.9L557.7 51.8 551.4 54.1 545.1 52.0Z" fill="#dedede" stroke="#989898" stroke-width="0.400"/><path d="M545.1 52.0L551.4 54.1 551.4 60.5 545.1 58.1Z" fill="#ececec" stroke="#989898" stroke-width="0.400"/><path d="M551.4 54.1L557.7 51.8 557.7 57.9 551.4 60.5Z" fill="#bdbdbd" stroke="#989898" stroke-width="0.400"/><path d="M540.8 52.3L544.1 53.5 540.8 55.1 537.5 53.7Z" fill="#dedede" stroke="#989898" stroke-width="0.400"/><path d="M537.5 53.7L540.8 55.1 540.8 59.3 537.5 57.7Z" fill="#ececec" stroke="#989898" stroke-width="0.400"/><path d="M540.8 55.1L544.1 53.5 544.1 57.5 540.8 59.3Z" fill="#bdbdbd" stroke="#989898" stroke-width="0.400"/>
<path d="M542.500 60.500l3.400-2 4 1.200.2 2.600-3.600 2.400-3.600-1.400z" fill="#f6f6f6" stroke="#bdbdbd" stroke-width="0.400"/>
<path d="M541.8 62.2L545.1 63.4 541.8 65.0 538.5 63.6Z" fill="#7e7e7e" stroke="#606060" stroke-width="0.400"/><path d="M538.5 63.6L541.8 65.0 541.8 69.2 538.5 67.6Z" fill="#8a8a8a" stroke="#606060" stroke-width="0.400"/><path d="M541.8 65.0L545.1 63.4 545.1 67.5 541.8 69.2Z" fill="#6e6e6e" stroke="#606060" stroke-width="0.400"/><path d="M552.1 61.7L556.1 63.2 552.1 65.1 548.1 63.4Z" fill="#f2f2f2" stroke="#9a9a9a" stroke-width="0.400"/><path d="M548.1 63.4L552.1 65.1 552.1 70.3 548.1 68.4Z" fill="#fbfbfb" stroke="#9a9a9a" stroke-width="0.400"/><path d="M552.1 65.1L556.1 63.2 556.1 68.1 552.1 70.3Z" fill="#c9c9c9" stroke="#9a9a9a" stroke-width="0.400"/>
</g>
<use href="#handle" x="570" y="58"/>

<!-- sketcher geometry -->
<defs><g id="ball"><circle r="3.300" fill="url(#gBall)" stroke="#8f8f8f" stroke-width="0.500"/></g></defs>
<circle cx="595.400" cy="61.500" r="3.800" fill="url(#gBall)" stroke="#8c8c8c" stroke-width="0.500"/>
<!-- arc -->
<g>
<path d="M623 53.300c8 0 15 6 15.300 14.300" fill="none" stroke="#a4a4a4" stroke-width="2.600"/>
<path d="M623 53.300c8 0 15 6 15.300 14.300" fill="none" stroke="#f4f4f4" stroke-width="1.200"/>
<use href="#ball" x="623" y="53.300"/><use href="#ball" x="623.500" y="67.800"/><use href="#ball" x="638.500" y="67.800"/>
</g>
<!-- circle -->
<g>
<circle cx="665.500" cy="60.800" r="9" fill="none" stroke="#a4a4a4" stroke-width="2.800"/>
<circle cx="665.500" cy="60.800" r="9" fill="none" stroke="#f6f6f6" stroke-width="1.400"/>
<use href="#ball" x="665.800" y="61"/><use href="#ball" x="675" y="61"/>
</g>
<!-- line -->
<g>
<path d="M695 67.300l16-14.400" stroke="#a4a4a4" stroke-width="3"/>
<path d="M695 67.300l16-14.400" stroke="#f4f4f4" stroke-width="1.400"/>
<use href="#ball" x="695" y="67.300"/><use href="#ball" x="711" y="53"/>
</g>
<!-- polyline -->
<g>
<path d="M730.400 66.800l4.600-8.400 7 8.400 4.400-14.100" fill="none" stroke="#a4a4a4" stroke-width="2.800" stroke-linejoin="round"/>
<path d="M730.400 66.800l4.600-8.400 7 8.400 4.400-14.100" fill="none" stroke="#f4f4f4" stroke-width="1.200" stroke-linejoin="round"/>
<use href="#ball" x="730.400" y="66.800"/><use href="#ball" x="735" y="58.400"/><use href="#ball" x="742" y="66.800"/><use href="#ball" x="746.400" y="52.800"/>
</g>
<!-- rectangle -->
<g>
<rect x="766.500" y="54" width="17" height="14" fill="none" stroke="#a0a0a0" stroke-width="3"/>
<rect x="766.500" y="54" width="17" height="14" fill="none" stroke="#e6e6e6" stroke-width="1"/>
<path d="M766.500 68h17v-14" fill="none" stroke="#9a9a9a" stroke-width="1.600"/>
<use href="#ball" x="782.800" y="53.800"/><use href="#ball" x="766.400" y="67.300"/>
</g>
<use href="#sep" x="798" y="49"/>
<!-- sketch fillet -->
<g>
<path d="M812.500 50.500v17.300h20" fill="none" stroke="#c9c9c9" stroke-width="1.800"/>
<path d="M812.500 50.500v17.300h20" fill="none" stroke="#fafafa" stroke-width="0.900" stroke-dasharray="2.500 1.500"/>
<path d="M812.500 54.500c.5 7.500 5.500 12.500 14 13" fill="none" stroke="#9a9a9a" stroke-width="0.900"/>
<path d="M810.300 67.800l2.200-2.200 2.200 2.200-2.200 2.200z" fill="#dcdcdc" stroke="#b4b4b4" stroke-width="0.500"/>
<circle cx="812.500" cy="54.300" r="2.700" fill="url(#gBall)" stroke="#8f8f8f" stroke-width="0.500"/>
<circle cx="826.700" cy="67.500" r="2.700" fill="url(#gBall)" stroke="#8f8f8f" stroke-width="0.500"/>
</g>
<!-- trim -->
<g>
<path d="M848.500 49.800l18.400 21.900M861.400 49.800l-9.500 21.900" stroke="#a2a2a2" stroke-width="2.600"/>
<path d="M848.500 49.800l18.400 21.900M861.400 49.800l-9.500 21.900" stroke="#f2f2f2" stroke-width="1.200"/>
<circle cx="857" cy="60.300" r="2.700" fill="url(#gBall)" stroke="#8f8f8f" stroke-width="0.500"/>
</g>
<!-- external geometry -->
<g>
<path d="M883 62.500l6-3h12.500l3.500 1.500v6.500l-3.500 4h-18.500z" fill="#bdbdbd" stroke="#9a9a9a" stroke-width="0.700"/>
<path d="M883 62.500l6-3h12.500l3.500 1.500-3.500 2.500h-18.500z" fill="#dcdcdc"/>
<path d="M901.500 63.500l3.500-2.500v6.500l-3.500 4z" fill="#8f8f8f"/>
<path d="M895 60.500l2.500-5" stroke="#6f6f6f" stroke-width="1"/>
<path d="M896.500 55.500l2-1.500.2 2.500z" fill="#6f6f6f"/>
<path d="M890.500 52.300h15" stroke="#8c8c8c" stroke-width="1.600" stroke-dasharray="2 1.300"/>
<circle cx="890.500" cy="52.300" r="1.600" fill="#8c8c8c"/><circle cx="905" cy="52.800" r="1.600" fill="#8c8c8c"/>
</g>
<!-- construction toggle -->
<g>
<rect x="921.500" y="50.500" width="5" height="20.500" fill="#ffffff" stroke="#b0b0b0"/>
<path d="M922 71.500h5.500" stroke="#c8c8c8"/>
<path d="M927.500 60.800l3-2.500v5zM933.500 60.800l-3-2.500v5z" fill="#8a8a8a"/>
<path d="M936.500 50.500v21" stroke="#8f8f8f" stroke-width="5" stroke-dasharray="5 1.200"/>
</g>
<use href="#handle" x="954" y="58"/>
<!-- constraints -->
<circle cx="979" cy="60.700" r="4.700" fill="#959595" stroke="#838383" stroke-width="0.800"/>
<g>
<path d="M1026 53.500c-9-1.500-16.500 4-16.500 17.500" fill="none" stroke="#838383" stroke-width="4.800"/>
<path d="M1026 53.500c-9-1.500-16.500 4-16.500 17.500" fill="none" stroke="#979797" stroke-width="3.400"/>
<circle cx="1010.700" cy="55.800" r="3.800" fill="#a2a2a2" stroke="#868686" stroke-width="0.800"/>
</g>
<rect x="1048.500" y="50.500" width="4.500" height="21" fill="#959595" stroke="#868686" stroke-width="0.800"/>
<rect x="1076.500" y="58.800" width="21" height="4.500" fill="#959595" stroke="#868686" stroke-width="0.800"/>
<g stroke="#868686" stroke-width="0.800" fill="#959595">
<path d="M1112.800 63.700l13-13 2.800 2.800-13 13z"/>
<path d="M1118.300 69.300l13-13 2.800 2.800-13 13z"/>
</g>
<path d="M1156.500 51.500h5v15h8v4.500h-20.500v-4.500h7.500z" fill="#959595" stroke="#868686" stroke-width="0.800"/>
<g>
<path d="M1184.500 58.500c8-1 13 4 13 12" fill="none" stroke="#838383" stroke-width="4.400"/>
<path d="M1184.500 58.500c8-1 13 4 13 12" fill="none" stroke="#979797" stroke-width="3"/>
<path d="M1189.200 52l2.400-2 14 15-2.400 2z" fill="#959595" stroke="#868686" stroke-width="0.800"/>
</g>
<rect x="1223.500" y="53.300" width="15" height="5.400" rx="0.800" fill="#959595" stroke="#868686" stroke-width="0.800"/>
<rect x="1223.500" y="63.800" width="15" height="5.400" rx="0.800" fill="#959595" stroke="#868686" stroke-width="0.800"/>
<g fill="#959595" stroke="#868686" stroke-width="0.800">
<path d="M1257 53l8.800 8.700-8.800 8.700v-4.400l5.200-4.300-5.200-4.300z"/>
<path d="M1276.800 53l-8.800 8.700 8.800 8.700v-4.400l-5.200-4.300 5.200-4.300z"/>
</g>
<path d="M1292 59l2.500 2.600-2.500 2.600M1296.300 59l2.500 2.600-2.500 2.600" fill="none" stroke="#000" stroke-width="1.700"/>

</svg>
<span id="t_combo" class="t" style="left:4.5px;top:83.94px;font-size:14.6px;line-height:20px;height:20px;font-weight:normal;color:#3c3b37;font-family:'Liberation Sans','DejaVu Sans',sans-serif;letter-spacing:0.056px">Combo View</span>
<span id="t_proj" class="t" style="left:10.5px;top:111.74px;font-size:14.6px;line-height:20px;height:20px;font-weight:normal;color:#3c3b37;font-family:'Liberation Sans','DejaVu Sans',sans-serif;letter-spacing:0.303px">Project</span>
<span id="t_tasks" class="t" style="left:73.4px;top:110.74px;font-size:14.6px;line-height:20px;height:20px;font-weight:normal;color:#3c3b37;font-family:'Liberation Sans','DejaVu Sans',sans-serif;letter-spacing:-0.312px">Tasks</span>
<span id="t_cancel" class="t" style="left:89.5px;top:159.14px;font-size:14.6px;line-height:20px;height:20px;font-weight:normal;color:#3c3b37;font-family:'Liberation Sans','DejaVu Sans',sans-serif;letter-spacing:-0.299px"><u>C</u>ancel</span>
<span id="t_ok" class="t" style="left:192.5px;top:159.14px;font-size:14.6px;line-height:20px;height:20px;font-weight:normal;color:#3c3b37;font-family:'Liberation Sans','DejaVu Sans',sans-serif;letter-spacing:-0.733px"><u>O</u>K</span>
<span id="t_h1" class="t" style="left:43.3px;top:201.54px;font-size:14.6px;line-height:20px;height:20px;font-weight:bold;color:#ffffff;font-family:'Liberation Sans','DejaVu Sans',sans-serif;letter-spacing:-0.028px">Transformed feature messages</span>
<span id="t_msg" class="t" style="left:26.1px;top:235.71px;font-size:13px;line-height:18px;height:18px;font-weight:normal;color:#008000;font-family:'Liberation Serif','DejaVu Serif',serif;letter-spacing:0.010px">Transformation succeeded</span>
<span id="t_h2" class="t" style="left:43.3px;top:290.64px;font-size:14.6px;line-height:20px;height:20px;font-weight:bold;color:#ffffff;font-family:'Liberation Sans','DejaVu Sans',sans-serif;letter-spacing:0.177px">LinearPattern parameters</span>
<span id="t_orig" class="t" style="left:26.7px;top:329.94px;font-size:14.6px;line-height:20px;height:20px;font-weight:normal;color:#3c3b37;font-family:'Liberation Sans','DejaVu Sans',sans-serif;letter-spacing:0.291px">Original feature</span>
<span id="t_pocket" class="t" style="left:145.7px;top:329.94px;font-size:14.6px;line-height:20px;height:20px;font-weight:normal;color:#aeaca8;font-family:'Liberation Sans','DejaVu Sans',sans-serif;letter-spacing:0.069px">Pocket</span>
<span id="t_dir" class="t" style="left:26.7px;top:362.64px;font-size:14.6px;line-height:20px;height:20px;font-weight:normal;color:#3c3b37;font-family:'Liberation Sans','DejaVu Sans',sans-serif;letter-spacing:0.319px">Direction</span>
<span id="t_hsa" class="t" style="left:116px;top:362.64px;font-size:14.6px;line-height:20px;height:20px;font-weight:normal;color:#3c3b37;font-family:'Liberation Sans','DejaVu Sans',sans-serif;letter-spacing:0.141px">Horizontal sketch axis</span>
<span id="t_rev" class="t" style="left:51px;top:392.94px;font-size:14.6px;line-height:20px;height:20px;font-weight:normal;color:#3c3b37;font-family:'Liberation Sans','DejaVu Sans',sans-serif;letter-spacing:0.106px">Reverse direction</span>
<span id="t_len" class="t" style="left:26.7px;top:423.94px;font-size:14.6px;line-height:20px;height:20px;font-weight:normal;color:#3c3b37;font-family:'Liberation Sans','DejaVu Sans',sans-serif;letter-spacing:0.174px">Length</span>
<span id="t_100" class="t" style="left:167.7px;top:423.94px;font-size:14.6px;line-height:20px;height:20px;font-weight:normal;color:#3c3b37;font-family:'Liberation Sans','DejaVu Sans',sans-serif;letter-spacing:-0.178px">100,000</span>
<span id="t_occ" class="t" style="left:26.7px;top:456.64px;font-size:14.6px;line-height:20px;height:20px;font-weight:normal;color:#3c3b37;font-family:'Liberation Sans','DejaVu Sans',sans-serif;letter-spacing:-0.108px">Occurrences</span>
<span id="t_8" class="t" style="left:167.7px;top:456.64px;font-size:14.6px;line-height:20px;height:20px;font-weight:normal;color:#3c3b37;font-family:'Liberation Sans','DejaVu Sans',sans-serif;letter-spacing:0.000px">8</span>
<span id="t_upd" class="t" style="left:51px;top:486.64px;font-size:14.6px;line-height:20px;height:20px;font-weight:normal;color:#3c3b37;font-family:'Liberation Sans','DejaVu Sans',sans-serif;letter-spacing:0.190px">Update view</span>
<span id="t_start" class="t" style="left:325.6px;top:688.04px;font-size:14.6px;line-height:20px;height:20px;font-weight:normal;color:#3c3b37;font-family:'Liberation Sans','DejaVu Sans',sans-serif;letter-spacing:0.100px">Start page</span>
<span id="t_doc" class="t" style="left:458.7px;top:688.84px;font-size:14.6px;line-height:20px;height:20px;font-weight:normal;color:#3c3b37;font-family:'Liberation Sans','DejaVu Sans',sans-serif;letter-spacing:0.129px">T30-ejemplos-tut-ini : 1*</span>
<span id="t_pd" class="t" style="left:482.8px;top:10.74px;font-size:14.6px;line-height:20px;height:20px;font-weight:normal;color:#3c3b37;font-family:'Liberation Sans','DejaVu Sans',sans-serif;letter-spacing:0.033px">Part Design</span>
<div id="leftedge" class="abs"></div>
<div id="leftwhite" class="abs"></div>
</body>
</html>
